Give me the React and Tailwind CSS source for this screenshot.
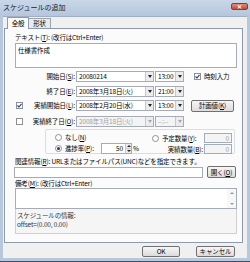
import React from "react";

// small widgets
function Arrow({ disabled }) {
  return (
    <span className="w-[8px] h-full bg-[#ececec] border-l border-[#c8c8c8] flex items-center justify-center">
      <span
        className={
          "w-0 h-0 border-x-[2px] border-t-[3px] border-x-transparent " +
          (disabled ? "border-t-[#a8a8a8]" : "border-t-[#222]")
        }
      />
    </span>
  );
}

function Combo({ value, w, disabled }) {
  return (
    <div
      className={
        "h-[11px] border border-[#a5acb5] flex items-stretch " +
        (disabled ? "bg-[#f4f4f4]" : "bg-white") +
        " " +
        w
      }
    >
      <span className={"flex-1 pl-[2px] leading-[9px] whitespace-nowrap overflow-hidden " + (disabled ? "text-[#a0a0a0]" : "text-black")}>{value}</span>
      <Arrow disabled={disabled} />
    </div>
  );
}

function Check({ checked }) {
  return (
    <span className="w-[7px] h-[7px] border border-[#8e8f8f] bg-white flex items-center justify-center">
      {checked && (
        <svg width="5" height="5" viewBox="0 0 5 5">
          <path d="M0.5 2.5 L2 4 L4.5 0.8" stroke="#1a3b8a" strokeWidth="1.1" fill="none" />
        </svg>
      )}
    </span>
  );
}

function Radio({ checked }) {
  return (
    <span className="w-[7px] h-[7px] rounded-full border border-[#8e8f8f] bg-white flex items-center justify-center">
      {checked && <span className="w-[3px] h-[3px] rounded-full bg-[#1e3a70]" />}
    </span>
  );
}

function Btn({ children, w, h = "h-[12px]" }) {
  return (
    <div
      className={
        "border border-[#707070] rounded-[2px] bg-gradient-to-b from-[#f6f6f6] to-[#dcdcdc] flex items-center justify-center leading-none whitespace-nowrap " +
        w +
        " " +
        h
      }
    >
      {children}
    </div>
  );
}

export default function App() {
  return (
    <div className="w-[250px] h-[262px] bg-[#b8c8dc] flex flex-col font-['Noto_Sans_CJK_JP','Noto_Sans',sans-serif] text-[6.5px] tracking-[-0.15px] text-black leading-none overflow-hidden">
      {/* title bar */}
      <div className="h-[16px] bg-gradient-to-b from-[#c9d7e8] to-[#b5c6dc] flex items-start px-[3px] pt-[3px]">
        <span className="text-[7px] tracking-normal text-[#1b1b1b] leading-[8px]">スケジュールの追加</span>
        <div className="ml-auto mr-[-1px] w-[17px] h-[7px] rounded-[2px] bg-gradient-to-b from-[#e08c7c] to-[#c24a36] border border-[#8a3a30] flex items-center justify-center text-white text-[6px] font-bold">
          ✕
        </div>
      </div>

      {/* client area */}
      <div className="mx-[3px] bg-[#f0f0f0] flex flex-col h-[242px] border-t border-[#9fb0c6]">
        {/* tabs */}
        <div className="h-[11px] flex items-end pl-[4px]">
          <div className="h-[12px] w-[22px] border border-b-0 border-[#8c9aab] bg-[#fbfbfb] flex items-center justify-center -mb-px z-10 relative">
            全般
          </div>
          <div className="h-[10px] w-[22px] border border-b-0 border-l-0 border-[#9aa5b2] bg-[#eaeaea] flex items-center justify-center">
            形状
          </div>
        </div>

        {/* tab panel */}
        <div className="ml-[1px] w-[239px] h-[215px] border border-[#8c9aab] bg-[#fbfbfb] pl-[10px] pt-[4px] flex flex-col">
          <div className="h-[8px] leading-[8px]">テキスト(<u>T</u>): (改行はCtrl+Enter)</div>
          <div className="mt-[2px] h-[25px] w-[222px] border border-[#a5acb5] bg-white pl-[2px] pt-[2px] leading-[8px]">
            仕様書作成
          </div>

          {/* 開始日 */}
          <div className="mt-[3px] h-[11px] flex items-center">
            <span className="w-[61px] text-right pr-[1px]">開始日(<u>S</u>):</span>
            <Combo value="20080214" w="w-[78px]" />
            <span className="w-[1px]" />
            <Combo value="13:00" w="w-[29px]" />
            <span className="ml-[10px]"><Check checked /></span>
            <span className="ml-[3px]">時刻入力</span>
          </div>

          {/* 終了日 */}
          <div className="mt-[4px] h-[11px] flex items-center">
            <span className="w-[61px] text-right pr-[1px]">終了日(<u>E</u>):</span>
            <Combo value="2008年3月18日(火)" w="w-[78px]" />
            <span className="w-[1px]" />
            <Combo value="21:00" w="w-[29px]" />
          </div>

          {/* 実績開始日 */}
          <div className="mt-[3px] h-[11px] flex items-center">
            <span className="w-[61px] flex items-center pr-[1px]">
              <span className="ml-[1px]"><Check checked /></span>
              <span className="ml-auto">実績開始日(<u>L</u>):</span>
            </span>
            <Combo value="2008年2月20日(水)" w="w-[78px]" />
            <span className="w-[1px]" />
            <Combo value="13:00" w="w-[29px]" />
            <span className="ml-[7px]">
              <Btn w="w-[43px]">計画値(<u>K</u>)</Btn>
            </span>
          </div>

          {/* 実績終了日 */}
          <div className="mt-[5px] h-[11px] flex items-center">
            <span className="w-[61px] flex items-center pr-[1px]">
              <span className="ml-[1px]"><Check /></span>
              <span className="ml-auto">実績終了日(<u>O</u>):</span>
            </span>
            <Combo value="2008年3月18日(火)" w="w-[78px]" disabled />
            <span className="w-[1px]" />
            <Combo value="--:--" w="w-[29px]" disabled />
          </div>

          {/* group box */}
          <div className="mt-[2px] ml-[30px] w-[190px] h-[25px] border border-[#d5dfe5] rounded-[2px] flex">
            <div className="w-[106px] flex flex-col pl-[9px] pt-[4px]">
              <div className="h-[8px] flex items-center">
                <Radio />
                <span className="ml-[3px]">なし(<u>N</u>)</span>
              </div>
              <div className="mt-[2px] h-[11px] flex items-center">
                <Radio checked />
                <span className="ml-[3px] w-[36px]">進捗率(<u>P</u>):</span>
                <div className="h-[11px] w-[31px] border border-[#a5acb5] bg-white flex">
                  <span className="flex-1 text-right pr-[2px] leading-[9px]">50</span>
                  <span className="w-[6px] flex flex-col border-l border-[#c8c8c8] bg-[#ececec]">
                    <span className="flex-1 flex items-center justify-center border-b border-[#c8c8c8]">
                      <span className="w-0 h-0 border-x-[2px] border-b-[2px] border-x-transparent border-b-[#222]" />
                    </span>
                    <span className="flex-1 flex items-center justify-center">
                      <span className="w-0 h-0 border-x-[2px] border-t-[2px] border-x-transparent border-t-[#222]" />
                    </span>
                  </span>
                </div>
                <span className="ml-[1px]">%</span>
              </div>
            </div>
            <div className="flex-1 flex flex-col pt-[3px]">
              <div className="h-[10px] flex items-center">
                <Radio />
                <span className="ml-[3px] w-[42px]">予定数量(<u>Y</u>):</span>
                <span className="h-[10px] w-[28px] border border-[#a5acb5] bg-[#f4f4f4] text-right pr-[2px] leading-[8px] text-[#a0a0a0]">0</span>
              </div>
              <div className="mt-[1px] h-[10px] flex items-center">
                <span className="w-[52px] text-right pr-[1px]">実績数量(<u>B</u>):</span>
                <span className="h-[10px] w-[28px] border border-[#a5acb5] bg-[#f4f4f4] text-right pr-[2px] leading-[8px] text-[#a0a0a0]">0</span>
              </div>
            </div>
          </div>

          <div className="mt-[3px] h-[8px] leading-[8px]">関連情報(<u>R</u>): URLまたはファイルパス(UNC)などを指定できます。</div>
          <div className="mt-[1px] h-[12px] flex items-center">
            <div className="h-[11px] w-[189px] border border-[#a5acb5] bg-white -ml-[1px]" />
            <span className="ml-[4px]">
              <Btn w="w-[29px]">開く(<u>O</u>)</Btn>
            </span>
          </div>

          <div className="mt-[1px] h-[8px] leading-[8px]">備考(<u>M</u>): (改行はCtrl+Enter)</div>
          <div className="mt-[1px] h-[21px] w-[222px] border border-[#a5acb5] bg-white flex justify-end">
            <div className="w-[9px] flex flex-col items-center justify-between py-[3px] bg-[#f7f7f7]">
              <span className="w-0 h-0 border-x-[2px] border-b-[2px] border-x-transparent border-b-[#9a9a9a]" />
              <span className="w-0 h-0 border-x-[2px] border-t-[2px] border-x-transparent border-t-[#9a9a9a]" />
            </div>
          </div>
          <div className="h-[25px] w-[222px] border border-t-0 border-[#d0d0d0] bg-[#f5f5f5] pl-[1px] pt-[2px] leading-[9px] text-[#333]">
            <div>スケジュールの情報:</div>
            <div>offset=(0.00, 0.00)</div>
          </div>
        </div>

        {/* OK / Cancel */}
        <div className="mt-[3px] h-[11px] flex">
          <span className="ml-[139px]">
            <Btn w="w-[38px]" h="h-[11px]">OK</Btn>
          </span>
          <span className="ml-[16px]">
            <Btn w="w-[39px]" h="h-[11px]">キャンセル</Btn>
          </span>
        </div>
      </div>
      <div className="mt-auto h-[1px] bg-[#3c4f66]" />
    </div>
  );
}
